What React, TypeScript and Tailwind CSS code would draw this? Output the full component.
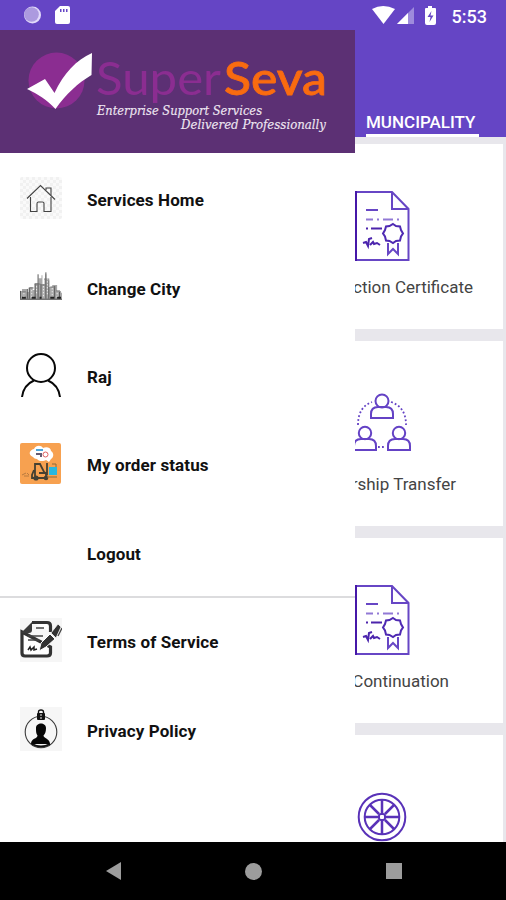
import type { ReactNode } from "react";

function Logo() {
  return (
    <svg viewBox="0 0 355 123" className="block h-[123px] w-[355px] shrink-0">
      <rect width="355" height="123" fill="#5c3074" />
      <circle cx="56.500" cy="50.500" r="28" fill="#8b2d91" />
      <path d="M27 59 L45 49 L54.500 63 C64 43 76 30 92 23 L91.500 45 C78 53 66 64 55.500 79 C47 70 38 64 27 59Z" fill="#fff" />
      <text x="96" y="64.500" textLength="125" lengthAdjust="spacingAndGlyphs" fontFamily="Lato, sans-serif" fontSize="47" fill="#8b2d91">Super</text>
      <text x="224" y="64.500" textLength="103" lengthAdjust="spacingAndGlyphs" fontFamily="Lato, sans-serif" fontSize="47" fontWeight="500" stroke="#f96b10" strokeWidth="0.800" fill="#f96b10">Seva</text>
      <g fontFamily="'DejaVu Serif', serif" fontStyle="italic" fontSize="12" fill="#eee6f1" stroke="#eee6f1" strokeWidth="0.150">
        <text x="97" y="84.500" textLength="165" lengthAdjust="spacingAndGlyphs">Enterprise Support Services</text>
        <text x="181" y="98.500" textLength="145" lengthAdjust="spacingAndGlyphs">Delivered Professionally</text>
      </g>
    </svg>
  );
}

function HomeIcon() {
  return (
    <svg viewBox="0 0 42 42" className="h-[42px] w-[42px]">
      <defs>
        <pattern id="checks" width="6" height="6" patternUnits="userSpaceOnUse">
          <rect width="6" height="6" fill="#fafafa" />
          <path d="M0 0h3v3H0zM3 3h3v3H3z" fill="#f1f1f1" />
        </pattern>
      </defs>
      <rect width="42" height="42" rx="2" fill="url(#checks)" />
      <g fill="none" stroke="#444" strokeWidth="1.100">
        <path d="M7 21.500 L20.500 8.500 L35 22.500" />
        <path d="M10.500 20 V34.500 H17 V26.500 Q17 25 18.500 25 H22.500 Q24 25 24 26.500 V34.500 H31 V20" />
        <path d="M26 13 V11 H31 V18" />
      </g>
    </svg>
  );
}

function CityIcon() {
  return (
    <svg viewBox="0 0 43 42" className="h-[42px] w-[43px]">
      <path d="M0 34V25h2v-2h5v3h2v-5h4v3h2v-7h4v-5h3V9h1v9h2v-6h1V8h1v4h2v9h4v-2h5v6h4v2h3v7z" fill="#a9a9a9" />
      <g fill="none" stroke="#555" strokeWidth="1">
        <path d="M0 33.500H43M.5 33V25M7.500 33V23M9.500 33V22M15.500 33V18M18.500 8V33M21.500 18V33M26.500 6V33M29.500 14V33M35.500 20V33M40.500 26V33" />
        <path d="M2 26h4M10 22h4M15 18h6M22 19h6M25 13h5M31 21h5M37 25h4" stroke="#777" />
      </g>
      <path d="M4 27v6M12 24v9M17 20v9M24 20v12M28 12v18M33 22v10M38 27v6" stroke="#eee" strokeDasharray="1.500 1.500" />
      <path d="M2 32h4M12 32h4M20 32h2M31 32h4M38 32h4" stroke="#222" strokeWidth="2" />
    </svg>
  );
}

function UserIcon() {
  return (
    <svg viewBox="0 0 42 44" className="h-[44px] w-[42px]" fill="none" stroke="#080808" strokeWidth="2">
      <circle cx="21" cy="15" r="14" />
      <path d="M2 44 Q3.500 32 14 27.500M28 27.500 Q38.500 32 40 44" />
    </svg>
  );
}

function OrderIcon() {
  return (
    <svg viewBox="0 0 42 42" className="h-[42px] w-[42px]">
      <rect x="0" y="1" width="41" height="41" rx="2" fill="#f7a150" />
      <path d="M13 15c-5-2-4-7 1-8 2-4 7-4 9-1 4-2 8 0 8 3 3 2 3 6 0 8l-2 3-3-2c-3 2-8 1-9-1-2 0-3-1-4-2z" fill="#fff" />
      <path d="M16 8h7" stroke="#4ba6dc" strokeWidth="2" />
      <path d="M16 12h4M21 11v4" stroke="#665b72" strokeWidth="2" />
      <circle cx="25.500" cy="12.500" r="2.500" fill="none" stroke="#e06063" />
      <path d="M15 34V22h5l4 8 3 2V21M14 28l-2 5v3h14v-5h-7" fill="none" stroke="#454031" strokeWidth="1.800" />
      <circle cx="16" cy="36" r="2.600" fill="#444034" />
      <circle cx="26" cy="36" r="2.300" fill="#444034" />
      <path d="M29 25h8v8h-8z" fill="#27b7df" />
      <path d="M32 22h4v3M27 35h10" stroke="#8e6b39" fill="none" />
      <path d="M2 33l4-2M4 34h5M7 31l2 2" stroke="#b87a3f" />
    </svg>
  );
}

function TermsIcon() {
  return (
    <svg viewBox="0 0 42 44" className="h-[44px] w-[42px]">
      <rect width="42" height="44" fill="#f6f6f6" />
      <path d="M12 4.500H27Q30.500 4.500 30.500 8V14M30.500 29V35Q30.500 38 27 38H5Q2 38 2 35V14Z" fill="#fff" stroke="#333" strokeWidth="3.200" />
      <path d="M2 14 12 4v8q0 3-3 3H1z" fill="#3a3a3a" />
      <path d="M16 10h8M8 18h15M8 22h11" stroke="#444" strokeWidth="1.700" />
      <path d="M8 32l2-3 1 3 3-3v3l3-1" fill="none" stroke="#222" strokeWidth="1.500" />
      <path d="M30 16 35 21 26 29 19 33 21 25Z" fill="#333" stroke="#fff" strokeWidth="1" />
      <path d="M31 15 38 6 41 9 36 20Z" fill="#333" stroke="#fff" strokeWidth=".7" />
      <path d="M38 18 42 10" stroke="#444" strokeWidth="1.300" />
    </svg>
  );
}

function PrivacyIcon() {
  return (
    <svg viewBox="0 0 42 44" className="h-[44px] w-[42px]">
      <rect width="42" height="44" fill="#f6f6f6" />
      <circle cx="21" cy="25" r="15.800" fill="none" stroke="#3a3a3a" strokeWidth="1.100" />
      <path d="M16 21c0-6 10-6 10 0 0 4-1 6-2.500 7.500 0 3 6.500 3 6.500 8.500H11c0-6 6.500-5 6.500-8.500C16 27 16 24 16 21z" fill="#060606" />
      <path d="M12 37q9 5 18 0" stroke="#111" strokeWidth="2" fill="none" />
      <rect x="17" y="6" width="8" height="7" rx="1" fill="#111" />
      <path d="M18.500 7V5q0-2 2.500-2t2.500 2v2" fill="none" stroke="#111" strokeWidth="1.400" />
      <path d="M20 8h2M20 11h2" stroke="#eee" />
    </svg>
  );
}

function NavRow({ icon, label }: { icon?: ReactNode; label: string }) {
  return (
    <a className="flex h-[88.4px] items-center pl-5">
      <span className="mb-1 flex w-[42px] items-center">{icon}</span>
      <span className="ml-[25px] whitespace-nowrap text-[17px] leading-5 font-bold tracking-[0.1px] text-[#111]">{label}</span>
    </a>
  );
}

function CertificateIcon() {
  return (
    <svg viewBox="0 0 56 72" className="h-[72px] w-[56px]" fill="none" stroke="#6746c5" strokeWidth="2">
      <path d="M1 2H37L53.500 19V70H1Z" />
      <path d="M37 2V19H53.500" />
      <path d="M1 1V71" stroke="#4618a8" />
      <path d="M11 20H23" />
      <path d="M11 29.500H18M22 29.500H24M28 29.500H38M42 29.500H44" stroke="#9179d5" />
      <path d="M11 38.500H13M16 38.500H27" stroke="#4d24ac" />
      <path d="M38 34l3 2 4 .5 1 3.500 2 3.500-2 3-1 4-4 .5-3 2-3.500-2-3.500-.5-1-4-2-3 2-3.500 1-3.500 3.500-.5z" stroke="#4f2ab3" />
      <path d="M33 53V64l5-5 5 5V53" />
      <path d="M8 53l3-1 2 4 1-7 3-1M15 55l3-3 1 2 3-1 3 2" stroke="#4b24ad" />
    </svg>
  );
}

function TransferIcon() {
  return (
    <svg viewBox="0 0 56 62" className="h-[62px] w-[56px]" fill="none" stroke="#6442c5" strokeWidth="2">
      <circle cx="27" cy="9" r="6.500" />
      <path d="M16 26V22q0-7 7-7h8q7 0 7 7v4Z" />
      <circle cx="10" cy="41" r="6.200" />
      <path d="M-1 58V54q0-7 7-7h8q7 0 7 7v4Z" />
      <circle cx="44" cy="41" r="6.200" />
      <path d="M33 58V54q0-7 7-7h8q7 0 7 7v4Z" />
      <path d="M3 33Q3 15 17 10M36 10Q51 15 51 33M23 55H31" strokeDasharray="1.800 2.200" strokeWidth="1.800" />
    </svg>
  );
}

function WheelIcon() {
  return (
    <svg viewBox="0 0 50 50" className="h-[50px] w-[50px]" fill="none" stroke="#5932b8" strokeWidth="2">
      <circle cx="25" cy="25" r="23.300" />
      <circle cx="25" cy="25" r="17.300" />
      <g strokeWidth="2.500">
        <path d="M25 8V21M25 29V42M8 25H21M29 25H42M13 13L22 22M28 28L37 37M37 13L28 22M22 28L13 37" />
      </g>
      <rect x="22" y="22" width="6" height="6" rx="2" />
    </svg>
  );
}

function ServiceCard({ icon, label, labelClass }: { icon: ReactNode; label?: string; labelClass?: string }) {
  return (
    <div className="flex h-[185px] w-[148px] shrink-0 flex-col overflow-hidden bg-white pt-[46px]">
      <div className="flex h-[72px] items-center">{icon}</div>
      <div className={`mt-[15px] flex justify-end text-[17px] leading-5 whitespace-nowrap text-[#444] ${labelClass ?? ""}`}>{label}</div>
    </div>
  );
}

export default function App() {
  return (
    <div className="flex h-[900px] w-[506px] flex-col overflow-hidden bg-[#6545c5] font-[Roboto,sans-serif]">
      <header className="flex h-[30px] shrink-0 items-center justify-between pr-[19px] pl-[23px]">
        <div className="flex items-center gap-[13px]">
          <svg viewBox="0 0 18 18" className="h-[18px] w-[18px]">
            <circle cx="9.500" cy="9" r="8.500" fill="#e2dafa" />
            <circle cx="8.500" cy="8.500" r="7.300" fill="#ac9adf" />
          </svg>
          <svg viewBox="0 0 16 20" className="h-5 w-4">
            <path d="M6 1h8q2 0 2 2v14q0 2-2 2H3q-2 0-2-2V6z" fill="#fff" />
            <path d="M6 4h1.500v3H6zM9 4h1.500v3H9zM12 4h1.500v3H12z" fill="#6545c5" />
          </svg>
        </div>
        <div className="flex items-center">
          <svg viewBox="0 0 76 22" className="mr-1 h-[22px] w-[76px]">
            <path d="M0 5Q11 -1 23 5L11.500 20Z" fill="#fff" />
            <path d="M42 3V20H25Z" fill="#9e8bdc" />
            <path d="M36 9V20H25Z" fill="#fff" />
            <path d="M56 2h4v2h3q1 0 1 1v14q0 2-2 2h-7q-2 0-2-2V5q0-1 1-1h2z" fill="#fff" />
            <path d="M59.500 7L55.500 13H58.500L57.500 18L61.500 11.500H58.500Z" fill="#6545c5" />
          </svg>
          <span className="mt-[3px] text-[18px] leading-5 font-medium text-white">5:53</span>
        </div>
      </header>

      <main className="flex h-[812px] shrink-0">
        <aside className="flex w-[355px] shrink-0 flex-col bg-white">
          <Logo />
          <nav className="pt-[3px]">
            <NavRow icon={<HomeIcon />} label="Services Home" />
            <NavRow icon={<CityIcon />} label="Change City" />
            <NavRow icon={<UserIcon />} label="Raj" />
            <NavRow icon={<OrderIcon />} label="My order status" />
            <NavRow label="Logout" />
          </nav>
          <nav className="-mt-[2px] border-t-2 border-[#dcdcde]">
            <NavRow icon={<TermsIcon />} label="Terms of Service" />
            <NavRow icon={<PrivacyIcon />} label="Privacy Policy" />
          </nav>
        </aside>

        <section className="flex w-[151px] flex-col overflow-hidden">
          <div className="flex h-[107px] shrink-0 flex-col justify-end pl-[11px]">
            <div className="w-[113px] border-b-[3px] border-white pb-px text-[17px] leading-[22px] font-medium whitespace-nowrap text-white">MUNCIPALITY</div>
          </div>
          <div className="flex min-h-0 grow flex-col gap-3 overflow-hidden bg-[#e8e7ec] pt-[7px]">
            <ServiceCard icon={<CertificateIcon />} label="ction Certificate" labelClass="pr-[30px]" />
            <ServiceCard icon={<TransferIcon />} label="rship Transfer" labelClass="pr-[47px]" />
            <ServiceCard icon={<CertificateIcon />} label="Continuation" labelClass="pr-[54px]" />
            <ServiceCard icon={<div className="ml-[2px]"><WheelIcon /></div>} />
          </div>
        </section>
      </main>

      <footer className="flex h-[58px] shrink-0 items-center justify-between bg-black pr-[104px] pl-[106px]">
        <svg viewBox="0 0 15 18" className="h-[18px] w-[15px]"><path d="M0 9L15 0V18Z" fill="#9c9c9c" /></svg>
        <span className="h-[17px] w-[17px] rounded-full bg-[#9c9c9c]" />
        <span className="h-4 w-4 bg-[#9c9c9c]" />
      </footer>
    </div>
  );
}
